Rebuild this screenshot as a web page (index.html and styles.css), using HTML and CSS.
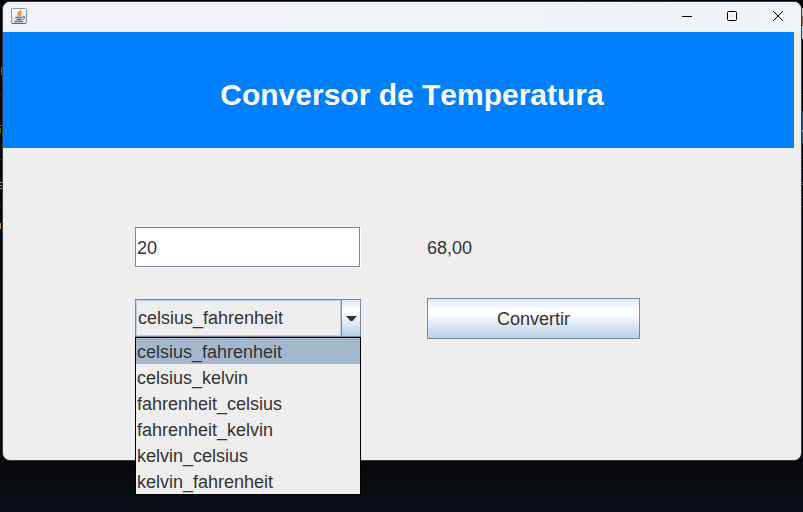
FILE: index.html
```html
<!DOCTYPE html>
<html lang="es">
<head>
<meta charset="utf-8">
<title>Conversor de Temperatura</title>
<link rel="stylesheet" href="styles.css">
</head>
<body>
<div class="backdrop" aria-hidden="true">
  <svg width="803" height="512" viewBox="0 0 803 512">
    <path d="M0 94.5H3M0 159.5H3M0 206.5H3M801 94.5h2M801 159.5h2M801 168.5h2M801 197.5h2M801 206.5h2" stroke="#24272c"/>
    <path d="M1.500 67v8" stroke="#55585c"/>
    <path d="M0 125.500h3" stroke="#3d76b8"/>
    <path d="M0 128h1v5h-1z" fill="#3f6b20"/>
    <path d="M0 182.500h2M0 185.500h3M0 188.500h2" stroke="#8d9095"/>
    <path d="M0 223h1v6h-1z" fill="#b08d66"/>
    <path d="M801 111h2v32h-2z" fill="#174a8c"/>
    <path d="M802 130h1v2h-1z" fill="#7ba4d8"/>
    <path d="M801 182.500h2M801 184.500h2" stroke="#777a80"/>
    <path d="M802 8h1v8h-1z" fill="#c8c8c8"/>
    <path d="M802 16h1v10h-1z" fill="#8b6656"/>
    <path d="M802 26h1v13h-1z" fill="#d8d8dc"/>
  </svg>
</div>
<main class="window">
  <header class="titlebar">
    <svg class="java" width="16" height="16" viewBox="0 0 16 16">
      <defs><linearGradient id="tile" x2="0" y2="1"><stop stop-color="#fff"/><stop offset="1" stop-color="#dfe4e8"/></linearGradient></defs>
      <rect x=".5" y=".5" width="15" height="15" rx="1" fill="url(#tile)" stroke="#8299aa"/>
      <path d="M1 15.500h14" stroke="#49687f"/>
      <path d="M9.500 2c.5 2-3.500 2.500-2.500 4.500.3.600 1 1 1.200 1.800M10.500 4.500c-2 .8-2 1.500-1.200 2.400.2.500 0 .8-.4 1.200" fill="none" stroke="#e9852c" stroke-width="1.400"/>
      <path d="M4.500 9.500h6.500M5.500 11.500h5M3.500 13.500h8.500M11.500 8.500c2.500-.5 2.500 2 0 2.800" fill="none" stroke="#5b7d98" stroke-width="1.300"/>
    </svg>
    <div class="controls">
      <svg width="46" height="30" viewBox="0 0 46 30"><path d="M19 14.500h10" stroke="#000"/></svg>
      <svg width="46" height="30" viewBox="0 0 46 30"><rect x="18.500" y="9.500" width="9" height="9" rx="1" fill="none" stroke="#000"/></svg>
      <svg width="46" height="30" viewBox="0 0 46 30"><path d="M18.200 9.200l9.600 9.600M27.800 9.200l-9.600 9.600" stroke="#000"/></svg>
    </div>
  </header>
  <h1 class="banner">Conversor de Temperatura</h1>
  <section class="form">
    <input class="field" type="text" value="20">
    <output class="result">68,00</output>
    <div class="combo">
      <div class="combo-value">celsius_fahrenheit</div>
      <div class="combo-arrow"><svg width="11" height="6" viewBox="0 0 11 6"><path d="M0 0h11L6.500 5h-2z" fill="#333"/></svg></div>
      <ul class="menu">
        <li class="selected">celsius_fahrenheit</li>
        <li>celsius_kelvin</li>
        <li>fahrenheit_celsius</li>
        <li>fahrenheit_kelvin</li>
        <li>kelvin_celsius</li>
        <li>kelvin_fahrenheit</li>
      </ul>
    </div>
    <button class="convert" type="button">Convertir</button>
  </section>
</main>
</body>
</html>
```
FILE: styles.css
```css
* { box-sizing: border-box; }
body {
  margin: 0;
  width: 803px;
  height: 512px;
  overflow: hidden;
  padding: 1px 1px 0 2px;
  background: linear-gradient(#030406 0, #07090d 455px, #08090c 465px, #0b0e14 500px);
  color: #333;
  font: 18px "Liberation Sans", Arial, sans-serif;
  font-kerning: none;
}
.backdrop { position: absolute; inset: 0; }
.backdrop svg { display: block; }
.window {
  position: relative;
  width: 800px;
  height: 460px;
  border: 1px solid #38393b;
  border-radius: 8px;
  background: #eee;
}
.titlebar {
  display: flex;
  justify-content: space-between;
  height: 30px;
  border-radius: 7px 7px 0 0;
  background: linear-gradient(90deg, #f2f3f8, #eff4f9);
}
.java { margin: 6px 0 0 8px; }
.controls { display: flex; }
.controls svg { display: block; }
.banner {
  width: 791px;
  height: 116px;
  margin: 0;
  padding-left: 27px;
  background: #0080ff;
  color: #fff;
  font-size: 30px;
  line-height: 125px;
  text-align: center;
}
.form {
  display: grid;
  grid-template-columns: 226px 213px;
  grid-template-rows: 41px 41px;
  column-gap: 66px;
  row-gap: 30px;
  padding: 79px 0 0 132px;
}
.field {
  width: 225px;
  height: 40px;
  padding: 2px 0 0 1px;
  border: 1px solid #7a8a99;
  border-radius: 0;
  outline: 0;
  background: #fff;
  box-shadow: 1px 1px #fff;
  color: #333;
  font: inherit;
}
.result { line-height: 42px; }
.combo {
  position: relative;
  display: flex;
  height: 38px;
  margin-top: 1px;
  border: 1px solid #7a8a99;
}
.combo-value {
  flex: 1;
  padding-left: 1px;
  border: 1px solid #b8cfe5;
  line-height: 35px;
}
.combo-arrow {
  display: flex;
  align-items: center;
  justify-content: center;
  width: 19px;
  padding-top: 2px;
  border-left: 1px solid #7a8a99;
  background: linear-gradient(#dde8f3, #fff 30%, #fff 35%, #b8cfe5);
}
.menu {
  position: absolute;
  top: 37px;
  left: -1px;
  width: 226px;
  margin: 0;
  padding: 0;
  border: 1px solid #000;
  background: #eee;
  list-style: none;
}
.menu li {
  height: 26px;
  padding-left: 1px;
  line-height: 28px;
}
.menu .selected { background: #a3b8cc; }
.convert {
  padding: 1px 0 0;
  border: 1px solid #7a8a99;
  border-radius: 0;
  background: linear-gradient(#dde8f3, #fff 30%, #fff 35%, #b8cfe5);
  color: #333;
  font: inherit;
}
```
